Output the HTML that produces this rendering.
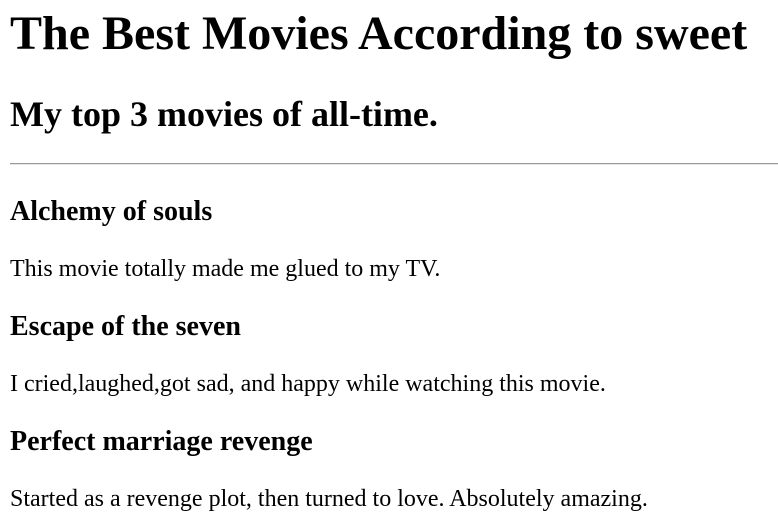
<!DOCTYPE html>
<html><head><meta charset="utf-8"><style>
html,body{margin:0;padding:0;background:#fff;width:778px;height:514px;overflow:hidden}
body{font-family:"Liberation Serif",serif;color:#000;position:relative}
.t{position:absolute;left:10px;line-height:1;white-space:nowrap;margin:0}
.h1{font-size:48px;font-weight:bold;top:10px}
.h2{font-size:36px;font-weight:bold;top:96px}
.h3{font-size:28px;font-weight:bold}
.p{font-size:24px}
.hr{position:absolute;left:10px;width:768px;top:163px;height:0;border-top:1px solid #9a9a9a;border-bottom:1px solid #e6e6e6}
</style></head><body>
<div class="t h1">The Best Movies According to sweet</div>
<div class="t h2">My top 3 movies of all-time.</div>
<div class="hr"></div>
<div class="t h3" style="top:197.5px">Alchemy of souls</div>
<div class="t p" style="top:257px">This movie totally made me glued to my TV.</div>
<div class="t h3" style="top:312.5px">Escape of the seven</div>
<div class="t p" style="top:372px">I cried,laughed,got sad, and happy while watching this movie.</div>
<div class="t h3" style="top:427.5px">Perfect marriage revenge</div>
<div class="t p" style="top:487px">Started as a revenge plot, then turned to love. Absolutely amazing.</div>
</body></html>
